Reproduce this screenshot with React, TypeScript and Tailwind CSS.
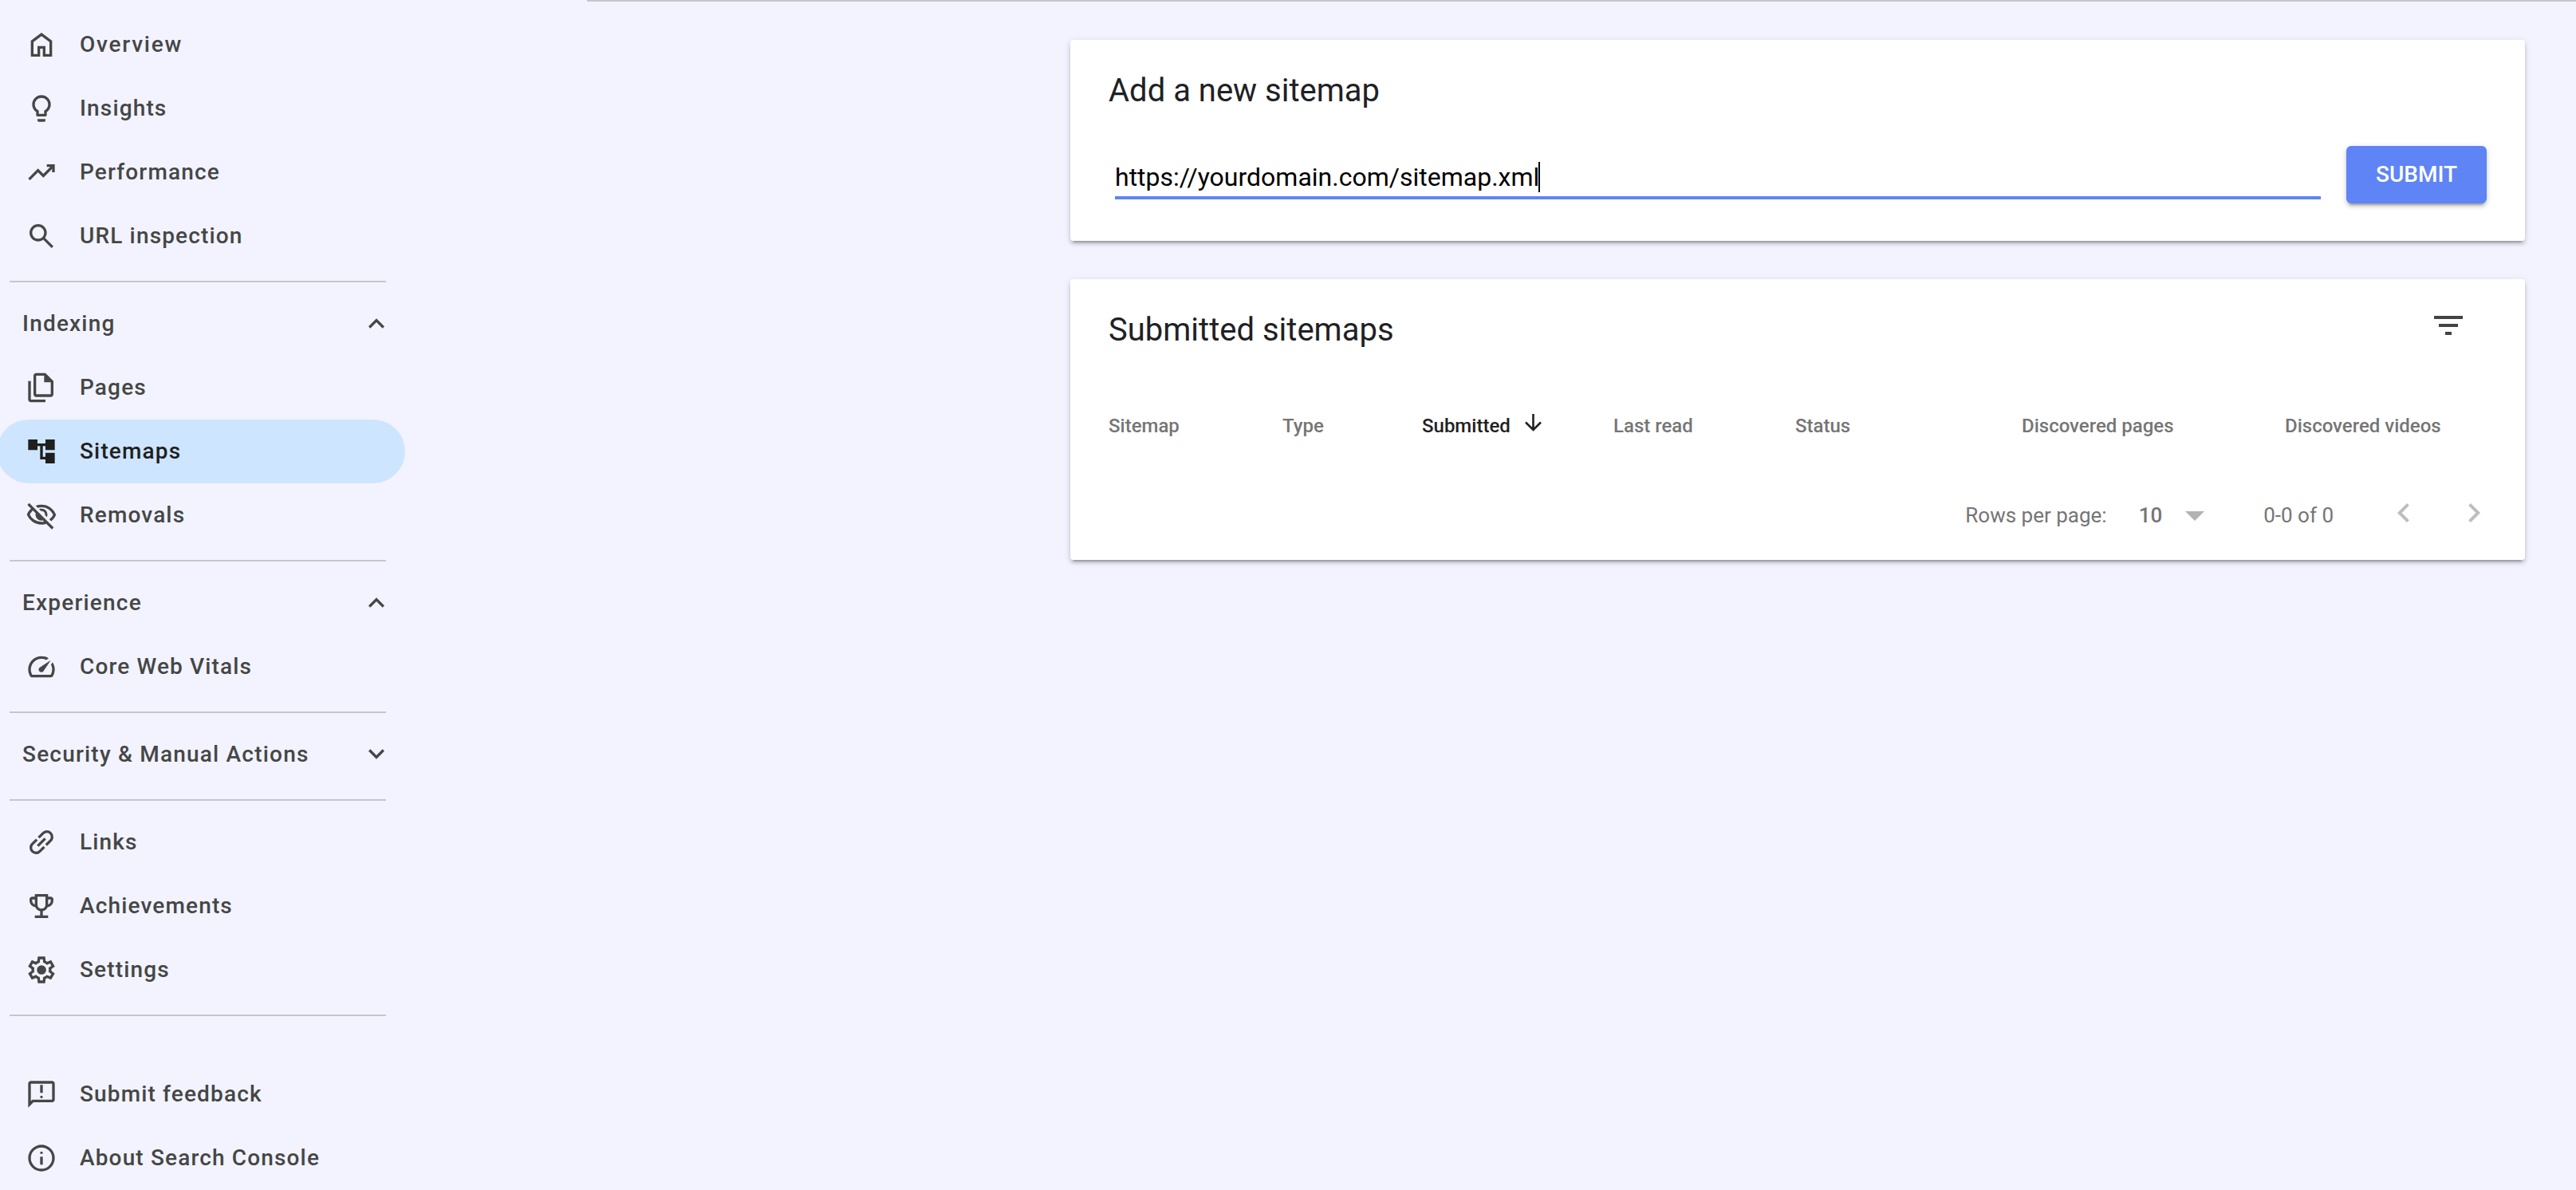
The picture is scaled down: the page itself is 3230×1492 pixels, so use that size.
import { useState } from 'react';

interface NavEntry {
  label: string;
  icon: string;
  active?: boolean;
  tracking?: string;
}

const ICONS = {
  home: 'M240-200h120v-240h240v240h120v-360L480-740 240-560v360Zm-80 80v-480l320-240 320 240v480H520v-240h-80v240H160Z',
  bulb: 'M360-120q0 17 11.5 28.5T400-80h160q17 0 28.5-11.5T600-120v-40H360v40Zm120-760q-116 0-198 82t-82 198q0 72 33 132t87 98v90q0 17 11.5 28.5T360-240h240q17 0 28.5-11.5T640-280v-90q54-38 87-98t33-132q0-116-82-198t-198-82Zm114 444-34 24v92H400v-92l-34-24q-41-28-63.5-71.5T280-600q0-83 58.5-141.5T480-800q83 0 141.5 58.5T680-600q0 49-22.5 92.5T594-436Z',
  trending: 'm136-240-56-56 296-298 160 160 208-206H640v-80h240v240h-80v-104L536-320 376-480 136-240Z',
  search: 'M784-120 532-372q-30 24-69 38t-83 14q-109 0-184.5-75.5T120-580q0-109 75.5-184.5T380-840q109 0 184.5 75.5T640-580q0 44-14 83t-38 69l252 252-56 56ZM380-400q75 0 127.5-52.5T560-580q0-75-52.5-127.5T380-760q-75 0-127.5 52.5T200-580q0 75 52.5 127.5T380-400Z',
  pages: 'M760-200H320q-33 0-56.5-23.5T240-280v-560q0-33 23.5-56.5T320-920h280l240 240v400q0 33-23.5 56.5T760-200ZM560-640v-200H320v560h440v-360H560ZM160-40q-33 0-56.5-23.5T80-120v-560h80v560h440v80H160Z',
  tree: 'M880-520v-320H600v120H360v-120H80v320h280v-120h80v400h160v120h280v-320H600v120h-80v-320h80v120h280Z',
  hidden: 'm644-428-58-58q9-47-27-88t-93-32l-58-58q17-8 34.5-12t37.5-4q75 0 127.5 52.5T660-500q0 20-4 37.5T644-428Zm128 126-58-56q38-29 67.5-63.5T832-500q-50-101-143.5-160.5T480-720q-29 0-57 4t-55 12l-62-62q41-17 84-25.5t90-8.5q151 0 269 83.5T920-500q-23 59-60.5 109.5T772-302Zm20 246L624-222q-35 11-70.5 16.5T480-200q-151 0-269-83.5T40-500q21-53 53-98.5t73-81.5L56-792l56-56 736 736-56 56ZM222-624q-29 26-53 57t-41 67q50 101 143.5 160.5T480-280q20 0 39-2.5t39-5.5l-36-38q-11 3-21 4.5t-21 1.5q-75 0-127.5-52.5T300-500q0-11 1.5-21t4.5-21l-84-82Z',
  speed: 'M418-340q24 24 62 23.5t56-27.5l224-336-336 224q-27 18-28.5 55t22.5 61Zm62-460q59 0 113.5 16.5T696-734l-76 48q-33-17-68.5-25.5T480-720q-133 0-226.5 93.5T160-400q0 42 11.5 83t32.5 77h552q23-38 33.5-79t10.5-85q0-36-8.5-70T766-540l48-76q30 47 47.5 100T880-406q0 57-14 109t-41 99q-11 18-30 28t-40 10H205q-21 0-40-10t-30-28q-26-45-40.5-95.5T80-400q0-83 31.5-155.5t86-127Q252-737 325-768.5T480-800Z',
  link: 'M318-120q-82 0-140-58t-58-140q0-40 15-76t43-64l134-133 56 56-134 134q-17 17-25.5 38.5T200-318q0 49 34.5 83.5T318-200q23 0 45-8.5t39-25.5l133-134 57 57-134 133q-28 28-64 43t-76 15Zm79-220-57-57 223-223 57 57-223 223Zm251-28-56-57 134-133q17-17 25-38t8-44q0-50-34-85t-84-35q-23 0-44.5 8.5T558-726L425-592l-57-56 134-134q28-28 64-43t76-15q82 0 139.5 58T839-641q0 39-14.5 75T782-502L648-368Z',
  trophy: 'M280-120v-80h160v-124q-49-11-87.5-41.5T296-442q-75-9-125.5-65.5T120-640v-40q0-33 23.5-56.5T200-760h80v-80h400v80h80q33 0 56.5 23.5T840-680v40q0 76-50.5 132.5T664-442q-18 46-56.5 76.5T520-324v124h160v80H280Zm0-408v-152h-80v40q0 38 22 68.5t58 43.5Zm200 128q50 0 85-35t35-85v-240H360v240q0 50 35 85t85 35Zm200-128q36-13 58-43.5t22-68.5v-40h-80v152Z',
  gear: 'm370-80-16-128q-13-5-24.5-12T307-235l-119 50L78-375l103-78q-1-7-1-13.5v-27q0-6.5 1-13.5L78-585l110-190 119 50q11-8 23-15t24-12l16-128h220l16 128q13 5 24.5 12t22.5 15l119-50 110 190-103 78q1 7 1 13.5v27q0 6.5-2 13.5l103 78-110 190-118-50q-11 8-23 15t-24 12L590-80H370Zm70-80h79l14-106q31-8 57.5-23.5T639-327l99 41 39-68-86-65q5-14 7-29.5t2-31.5q0-16-2-31.5t-7-29.5l86-65-39-68-99 42q-22-23-48.5-38.5T533-694l-13-106h-79l-14 106q-31 8-57.5 23.5T321-633l-99-41-39 68 86 64q-5 15-7 30t-2 32q0 16 2 31t7 30l-86 65 39 68 99-42q22 23 48.5 38.5T427-266l13 106Zm42-180q58 0 99-41t41-99q0-58-41-99t-99-41q-59 0-99.5 41T342-480q0 58 40.5 99t99.5 41Z',
  feedback: 'M480-360q17 0 28.5-11.5T520-400q0-17-11.5-28.5T480-440q-17 0-28.5 11.5T440-400q0 17 11.5 28.5T480-360Zm-40-160h80v-240h-80v240ZM80-80v-720q0-33 23.5-56.5T160-880h640q33 0 56.5 23.5T880-800v480q0 33-23.5 56.5T800-240H240L80-80Zm126-240h594v-480H160v525l46-45Z',
  info: 'M440-280h80v-240h-80v240Zm40-320q17 0 28.5-11.5T520-640q0-17-11.5-28.5T480-680q-17 0-28.5 11.5T440-640q0 17 11.5 28.5T480-600Zm0 520q-83 0-156-31.5T197-197q-54-54-85.5-127T80-480q0-83 31.5-156T197-763q54-54 127-85.5T480-880q83 0 156 31.5T763-763q54 54 85.5 127T880-480q0 83-31.5 156T763-197q-54 54-127 85.5T480-80Zm0-80q134 0 227-93t93-227q0-134-93-227t-227-93q-134 0-227 93t-93 227q0 134 93 227t227 93Z',
  expandLess: 'M480-528 296-344l-56-56 240-240 240 240-56 56-184-184Z',
  expandMore: 'M480-344 240-584l56-56 184 184 184-184 56 56-240 240Z',
};

const topItems: NavEntry[] = [
  { label: 'Overview', icon: ICONS.home, tracking: 'tracking-[1.75px]' },
  { label: 'Insights', icon: ICONS.bulb },
  { label: 'Performance', icon: ICONS.trending },
  { label: 'URL inspection', icon: ICONS.search },
];

const indexingItems: NavEntry[] = [
  { label: 'Pages', icon: ICONS.pages },
  { label: 'Sitemaps', icon: ICONS.tree, active: true },
  { label: 'Removals', icon: ICONS.hidden },
];

const experienceItems: NavEntry[] = [{ label: 'Core Web Vitals', icon: ICONS.speed }];

const moreItems: NavEntry[] = [
  { label: 'Links', icon: ICONS.link },
  { label: 'Achievements', icon: ICONS.trophy },
  { label: 'Settings', icon: ICONS.gear },
];

const footerItems: NavEntry[] = [
  { label: 'Submit feedback', icon: ICONS.feedback },
  { label: 'About Search Console', icon: ICONS.info },
];

function Icon({ d }: { d: string }) {
  return (
    <svg className="size-10 shrink-0" viewBox="0 -960 960 960" fill="currentColor">
      <path d={d} />
    </svg>
  );
}

function NavItem({ label, icon, active, tracking = 'tracking-[1.15px]' }: NavEntry) {
  return (
    <a
      className={`flex h-20 items-center gap-7 rounded-full pl-9 text-[28px] leading-10 font-medium ${tracking} ${
        active ? 'bg-[#cee5ff] text-[#1f1f1f]' : 'text-[#444746]'
      }`}
    >
      <Icon d={icon} />
      <span>{label}</span>
    </a>
  );
}

function NavSection({ title, items, defaultOpen = true }: { title: string; items: NavEntry[]; defaultOpen?: boolean }) {
  const [open, setOpen] = useState(defaultOpen);

  return (
    <div>
      <button
        onClick={() => setOpen(!open)}
        className="flex h-20 w-full items-center justify-between pr-4 pl-8 text-[28px] leading-10 font-medium tracking-[1.2px] text-[#444746]"
      >
        <span>{title}</span>
        <Icon d={open ? ICONS.expandLess : ICONS.expandMore} />
      </button>
      {open && items.map((item) => <NavItem key={item.label} {...item} />)}
    </div>
  );
}

function Divider() {
  return <div className="mt-4 mb-3 ml-4 h-0.5 w-[472px] bg-[#c4c6cc]" />;
}

function Sidebar() {
  return (
    <nav className="-ml-1 flex w-[512px] shrink-0 flex-col pt-4">
      {topItems.map((item) => <NavItem key={item.label} {...item} />)}
      <Divider />
      <NavSection title="Indexing" items={indexingItems} />
      <Divider />
      <NavSection title="Experience" items={experienceItems} />
      <Divider />
      <NavSection title="Security & Manual Actions" items={[]} defaultOpen={false} />
      <Divider />
      {moreItems.map((item) => <NavItem key={item.label} {...item} />)}
      <Divider />
      <div className="mt-[46px]">
        {footerItems.map((item) => <NavItem key={item.label} {...item} />)}
      </div>
    </nav>
  );
}

const cardClass =
  'rounded bg-white shadow-[0_4px_4px_rgba(0,0,0,0.14),0_6px_2px_-4px_rgba(0,0,0,0.2),0_2px_10px_rgba(0,0,0,0.12)]';

function AddSitemap() {
  return (
    <section className={`${cardClass} flex h-[252px] flex-col px-12 pt-[37px]`}>
      <h2 className="text-[40px] leading-[54px] text-[#202124]">Add a new sitemap</h2>
      <div className="mt-[42px] flex">
        <div className="ml-2 flex h-[67px] w-[1512px] items-center border-b-4 border-[#5e84f6]">
          <span className="mt-[14px] text-[32px] leading-10 whitespace-nowrap text-black">https://yourdomain.com/sitemap.xml</span>
          <span className="mt-[15px] -ml-px h-[38px] w-0.5 bg-black" />
        </div>
        <button className="ml-8 h-[72px] w-[176px] rounded-md bg-[#5e84f6] text-[28px] leading-10 font-medium text-white shadow-[0_4px_4px_rgba(0,0,0,0.14),0_6px_2px_-4px_rgba(0,0,0,0.2),0_2px_10px_rgba(0,0,0,0.12)]">
          SUBMIT
        </button>
      </div>
    </section>
  );
}

function SubmittedSitemaps() {
  return (
    <section className={`${cardClass} mt-12 flex h-[352px] flex-col px-12 pt-[37px]`}>
      <div className="flex justify-between pr-6">
        <h2 className="text-[40px] leading-[54px] text-[#202124]">Submitted sitemaps</h2>
        <svg className="-mt-[3px] size-12 text-[#444446]" viewBox="0 0 24 24" fill="currentColor">
          <path d="M10 18h4v-2h-4v2zM3 6v2h18V6H3zm3 7h12v-2H6v2z" />
        </svg>
      </div>

      {/* Table header */}
      <div className="mt-[77px] flex h-8 items-center text-2xl leading-8 font-medium whitespace-nowrap text-[#757575]">
        <span className="w-[218px]">Sitemap</span>
        <span className="w-[175px]">Type</span>
        <span className="flex w-[240px] items-center text-[#212121]">
          Submitted
          <svg className="ml-3 -mt-2 size-8" viewBox="0 0 32 32" fill="none" stroke="currentColor" strokeWidth="2.6">
            <path d="M16.5 5v20M7 15.5l9.5 9.5 9.5-9.5" />
          </svg>
        </span>
        <span className="w-[228px]">Last read</span>
        <span className="w-[284px]">Status</span>
        <span className="w-[330px]">Discovered pages</span>
        <span>Discovered videos</span>
      </div>

      {/* Pagination */}
      <div className="mt-20 flex h-8 items-center justify-end text-[26px] leading-8 whitespace-nowrap text-[#757575]">
        <span>Rows per page:</span>
        <span className="ml-10 font-medium">10</span>
        <svg className="mt-0.5 ml-[29px] h-3 w-6 text-[#b3b3b3]" viewBox="0 0 24 12" fill="currentColor">
          <path d="M0 0h24L12 12z" />
        </svg>
        <span className="ml-[74px]">0-0 of 0</span>
        <div className="-mr-2 ml-16 flex gap-10 text-[#bdbdbd]">
          <svg className="-mt-1.5 size-12" viewBox="0 0 24 24" fill="currentColor">
            <path d="M15.41 7.41 14 6l-6 6 6 6 1.41-1.41L10.83 12z" />
          </svg>
          <svg className="-mt-1.5 size-12" viewBox="0 0 24 24" fill="currentColor">
            <path d="M10 6 8.59 7.41 13.17 12l-4.58 4.59L10 18l6-6z" />
          </svg>
        </div>
      </div>
    </section>
  );
}

export default function App() {
  return (
    <div className="flex h-[1492px] w-[3230px] overflow-hidden bg-[#f3f3ff] font-[Roboto,sans-serif]">
      <Sidebar />
      <main className="ml-[228px] flex-1 border-t-2 border-[#c4c6cc] pt-12 pr-16 pl-[606px]">
        <AddSitemap />
        <SubmittedSitemaps />
      </main>
    </div>
  );
}
